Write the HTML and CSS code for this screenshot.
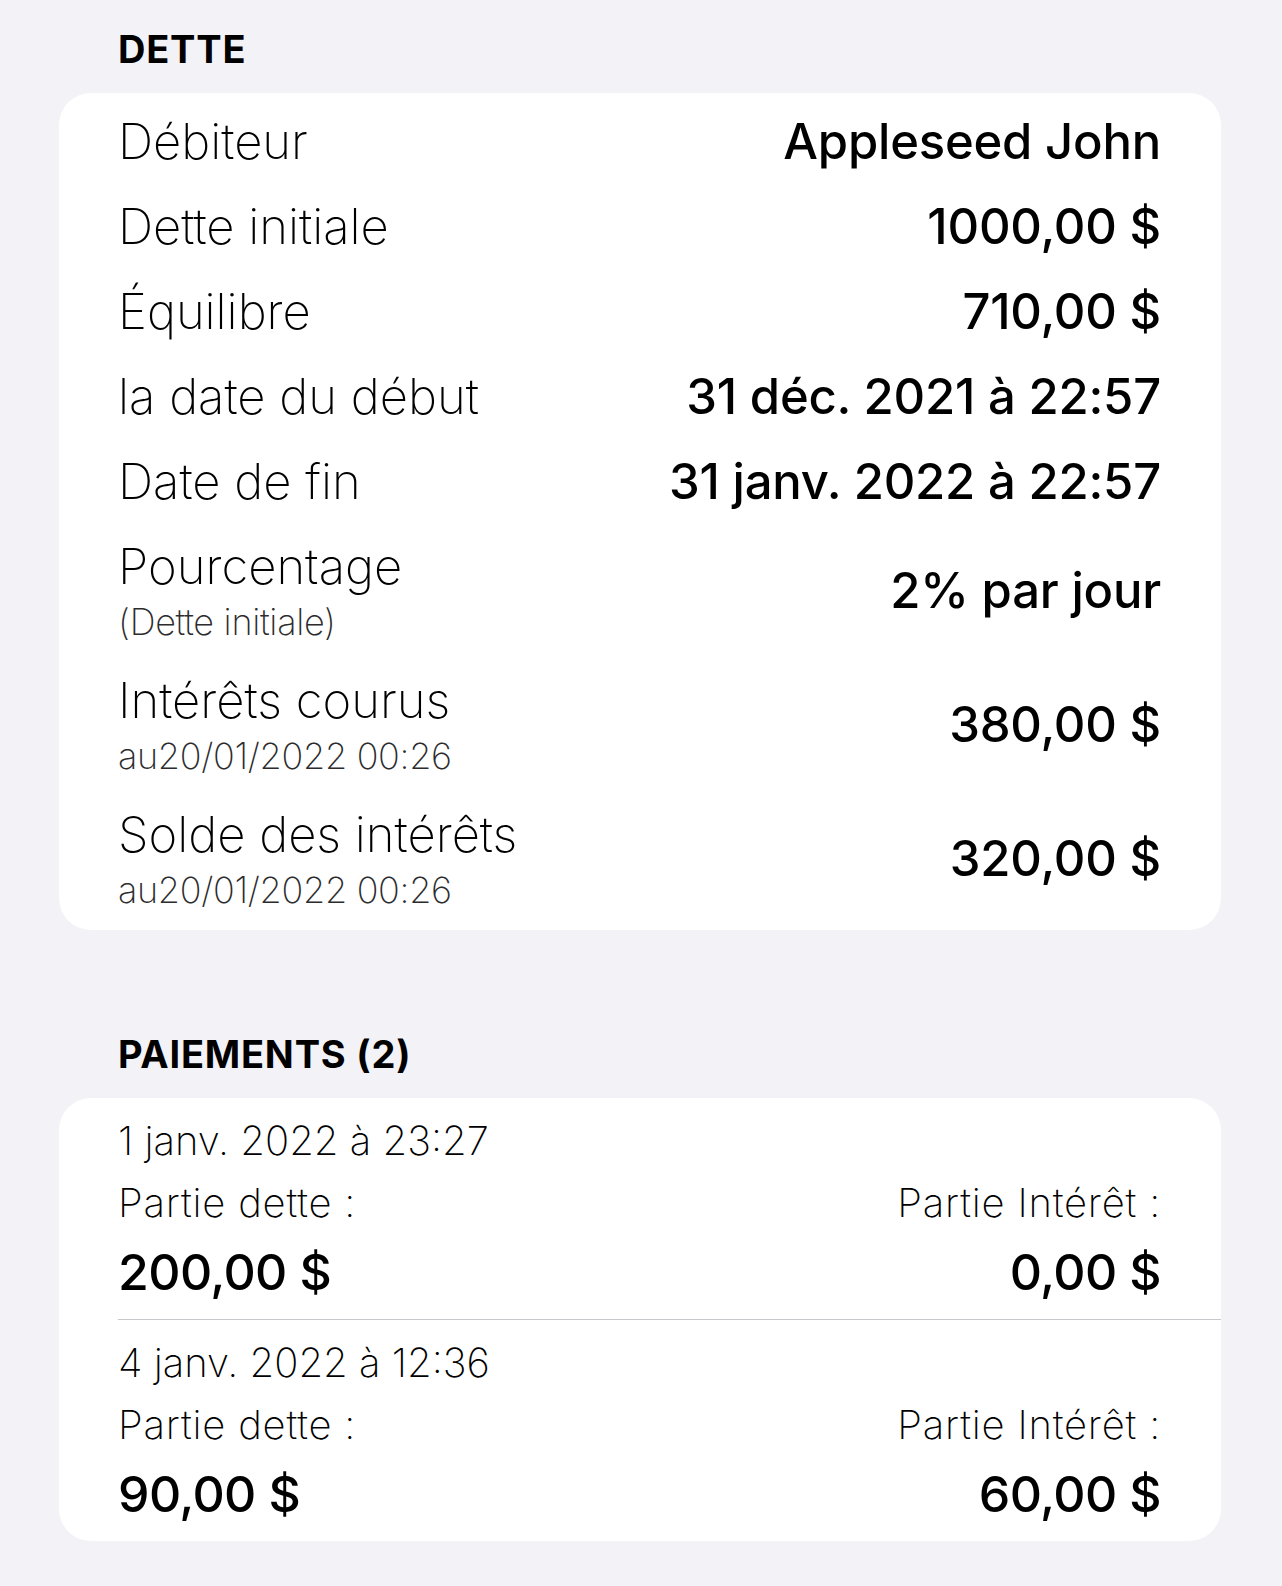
FILE: index.html
```html
<!DOCTYPE html>
<html lang="fr">
<head>
<meta charset="utf-8">
<title>Dette</title>
<link rel="stylesheet" href="styles.css">
</head>
<body>
<main class="page">
  <section class="group">
    <h2 class="group-title">DETTE</h2>
    <div class="card">
      <div class="row">
        <span class="label">Débiteur</span>
        <span class="value">Appleseed John</span>
      </div>
      <div class="row">
        <span class="label">Dette initiale</span>
        <span class="value">1000,00 $</span>
      </div>
      <div class="row">
        <span class="label">Équilibre</span>
        <span class="value">710,00 $</span>
      </div>
      <div class="row">
        <span class="label">la date du début</span>
        <span class="value">31 déc. 2021 à 22:57</span>
      </div>
      <div class="row">
        <span class="label">Date de fin</span>
        <span class="value">31 janv. 2022 à 22:57</span>
      </div>
      <div class="row row-tall">
        <div class="label-stack">
          <span class="label">Pourcentage</span>
          <span class="sub">(Dette initiale)</span>
        </div>
        <span class="value">2% par jour</span>
      </div>
      <div class="row row-tall">
        <div class="label-stack">
          <span class="label">Intérêts courus</span>
          <span class="sub">au20/01/2022 00:26</span>
        </div>
        <span class="value">380,00 $</span>
      </div>
      <div class="row row-tall">
        <div class="label-stack">
          <span class="label">Solde des intérêts</span>
          <span class="sub">au20/01/2022 00:26</span>
        </div>
        <span class="value">320,00 $</span>
      </div>
    </div>
  </section>

  <section class="group group-payments">
    <h2 class="group-title">PAIEMENTS (2)</h2>
    <div class="card card-list">
      <div class="payment">
        <div class="pay-date">1 janv. 2022 à 23:27</div>
        <div class="pay-parts">
          <div class="pay-col">
            <span class="pay-label">Partie dette :</span>
            <span class="pay-amount">200,00 $</span>
          </div>
          <div class="pay-col pay-col-right">
            <span class="pay-label">Partie Intérêt :</span>
            <span class="pay-amount">0,00 $</span>
          </div>
        </div>
      </div>
      <div class="payment">
        <div class="pay-date">4 janv. 2022 à 12:36</div>
        <div class="pay-parts">
          <div class="pay-col">
            <span class="pay-label">Partie dette :</span>
            <span class="pay-amount">90,00 $</span>
          </div>
          <div class="pay-col pay-col-right">
            <span class="pay-label">Partie Intérêt :</span>
            <span class="pay-amount">60,00 $</span>
          </div>
        </div>
      </div>
    </div>
  </section>
</main>
</body>
</html>
```

FILE: styles.css
```css
* {
  box-sizing: border-box;
}

html, body {
  margin: 0;
  padding: 0;
}

body {
  background: #f2f2f7;
  font-family: Inter, "Noto Sans", "Liberation Sans", sans-serif;
  color: #000;
  min-height: 1586px;
}

.page {
  padding: 0 61px 0 59px;
}

.group-title {
  margin: 0 0 24px 0;
  padding: 29px 0 0 59px;
  font-size: 38px;
  line-height: 40px;
  font-weight: 700;
  letter-spacing: 0.8px;
}

.group-payments .group-title {
  padding-top: 104px;
}

.card {
  background: #fff;
  border-radius: 32px;
  padding: 6px 60px 4px 59px;
}

.row {
  display: flex;
  align-items: center;
  justify-content: space-between;
  height: 85px;
}

.row-tall {
  height: 134px;
}

.label-stack {
  display: flex;
  flex-direction: column;
}

.label {
  font-size: 49px;
  font-weight: 200;
  line-height: 60px;
  letter-spacing: 0;
}

.row-tall .label {
  line-height: 62px;
}

.sub {
  font-size: 36px;
  font-weight: 200;
  line-height: 48px;
  color: #2c2c2e;
  letter-spacing: -0.3px;
}

.value {
  font-size: 49px;
  font-weight: 450;
  line-height: 60px;
  letter-spacing: -0.2px;
  text-align: right;
  white-space: nowrap;
}

.card-list {
  padding: 0 0 0 59px;
}

.payment {
  padding: 12px 60px 9px 0;
}

.payment + .payment {
  border-top: 1px solid #c8c7cc;
}

.pay-date {
  font-size: 40px;
  font-weight: 200;
  line-height: 62px;
  letter-spacing: 0;
}

.pay-parts {
  display: flex;
  justify-content: space-between;
}

.pay-col {
  display: flex;
  flex-direction: column;
}

.pay-col-right {
  align-items: flex-end;
}

.pay-label {
  font-size: 40px;
  font-weight: 200;
  line-height: 62px;
  letter-spacing: 0.8px;
}

.pay-amount {
  font-size: 50px;
  font-weight: 450;
  line-height: 76px;
  letter-spacing: -0.6px;
}
```
